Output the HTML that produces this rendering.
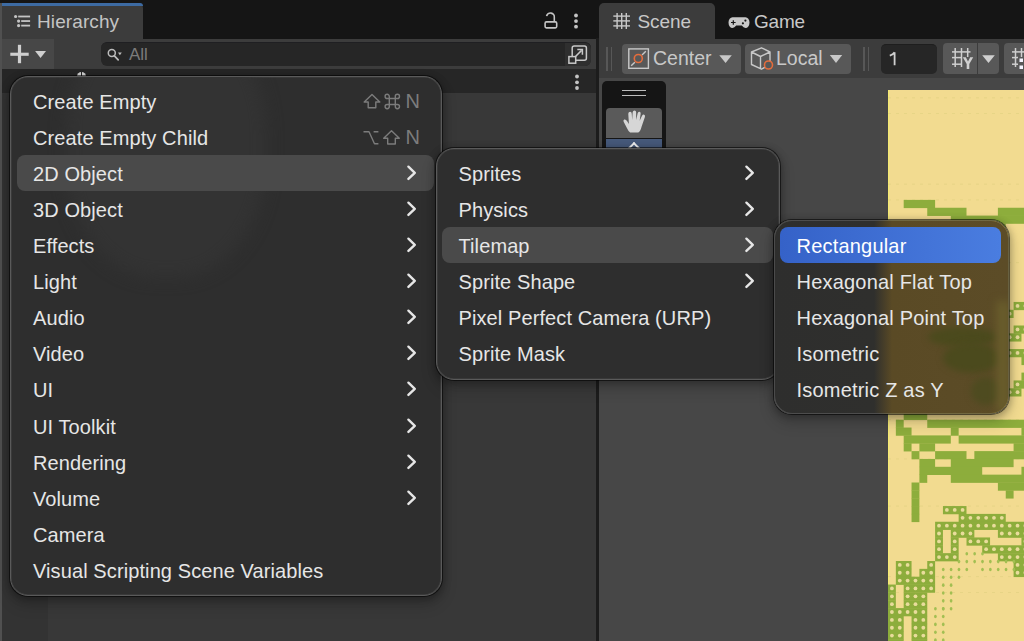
<!DOCTYPE html>
<html><head><meta charset="utf-8"><style>
*{box-sizing:border-box;margin:0;padding:0}
html,body{width:1024px;height:641px;overflow:hidden;background:#151515;font-family:"Liberation Sans",sans-serif;}
.abs{position:absolute}
#root{position:relative;width:1024px;height:641px;overflow:hidden}
.tab{position:absolute;background:#3c3c3c;border-radius:5px 5px 0 0}
.tabtxt{position:absolute;color:#c4c4c4;font-size:19px;letter-spacing:0.1px;line-height:19px;white-space:nowrap}
.menu{position:absolute;background:#2e2e2e;border:1px solid #5a5a5a;border-radius:18px;box-shadow:inset 0 0 0 0.6px #444,0 0 0 1px rgba(0,0,0,0.55),0 2px 7px 2px rgba(0,0,0,0.26),0 8px 14px 3px rgba(0,0,0,0.12)}
.item{position:absolute;height:36px;color:#e6e6e6;font-size:20px;letter-spacing:0.1px;line-height:36px;white-space:nowrap;transform:translateY(0.5px) scaleY(1.055);transform-origin:50% 52%}
.hl{position:absolute;background:#4a4a4a;border-radius:8px}
.btn{position:absolute;background:#585858;border-radius:4px}
.tbt{position:absolute;color:#c8c8c8;font-size:19.5px;line-height:19.5px;white-space:nowrap}
svg{overflow:visible}
</style></head><body><div id="root">
<div class="abs" style="left:0;top:0;width:1024px;height:39px;background:#151515"></div>
<div class="abs" style="left:0;top:3px;width:1.5px;height:638px;background:#505050"></div>
<div class="tab" style="left:1.5px;top:3px;width:141.5px;height:36.5px;border-radius:0 5px 0 0"></div>
<div class="abs" style="left:1.5px;top:3px;width:141.5px;height:3px;background:#3d6ba3;border-radius:0 4px 0 0"></div>
<svg class="abs" style="left:0;top:0" width="40" height="40">
<circle cx="15.6" cy="16.5" r="1.6" fill="#c4c4c4"/><rect x="18.2" y="15.6" width="11.9" height="1.8" fill="#c4c4c4"/>
<circle cx="18.6" cy="21.05" r="1.6" fill="#c4c4c4"/><rect x="21.2" y="20.15" width="8.9" height="1.8" fill="#c4c4c4"/>
<circle cx="18.6" cy="25.6" r="1.6" fill="#c4c4c4"/><rect x="21.2" y="24.7" width="8.9" height="1.8" fill="#c4c4c4"/>
</svg>
<div class="tabtxt" style="left:37px;top:12px">Hierarchy</div>
<svg class="abs" style="left:530px;top:0" width="60" height="40">
<rect x="15.1" y="21.9" width="11.6" height="6.0" rx="1.3" fill="none" stroke="#c4c4c4" stroke-width="1.6"/>
<path d="M16.6 16.2 A3.9 3.9 0 0 1 24.3 17.4 L24.3 21.5" fill="none" stroke="#c4c4c4" stroke-width="1.6"/>
<circle cx="46" cy="15.5" r="1.9" fill="#c4c4c4"/><circle cx="46" cy="21.1" r="1.9" fill="#c4c4c4"/><circle cx="46" cy="26.7" r="1.9" fill="#c4c4c4"/>
</svg>
<div class="abs" style="left:1.5px;top:39px;width:594.5px;height:30px;background:#3c3c3c"></div>
<div class="abs" style="left:2px;top:39px;width:52px;height:29.5px;background:#474747"></div>
<svg class="abs" style="left:0;top:36px" width="60" height="36">
<rect x="17.9" y="8.8" width="3.2" height="18.4" fill="#cfcfcf"/><rect x="10.3" y="16.7" width="18.4" height="3.1" fill="#cfcfcf"/>
<path d="M35.1 14.9 L46 14.9 L40.55 22 Z" fill="#cfcfcf"/>
</svg>
<div class="abs" style="left:101px;top:42px;width:489.5px;height:23.5px;background:#262626;border-radius:6px;border-top:1px solid #1f1f22"></div>
<div class="abs" style="left:565px;top:42.5px;width:25.5px;height:23px;background:#2f2f2f;border-radius:0 6px 6px 0"></div>
<svg class="abs" style="left:98px;top:38px" width="60" height="32">
<circle cx="13.8" cy="15.1" r="3.5" fill="none" stroke="#bdbdbd" stroke-width="1.5"/>
<path d="M16.4 17.8 L20.2 21.8" stroke="#bdbdbd" stroke-width="1.7" stroke-linecap="round"/>
<path d="M20 14.5 L23.8 14.5 L21.9 17.3 Z" fill="#bdbdbd"/>
</svg>
<div class="abs" style="left:129px;top:46px;color:#7b7b7b;font-size:17px;line-height:17px">All</div>
<svg class="abs" style="left:555px;top:38px" width="40" height="32">
<rect x="17.2" y="8" width="14.2" height="14.2" rx="2" fill="none" stroke="#c8c8c8" stroke-width="1.5"/>
<rect x="13.9" y="18.6" width="6.8" height="6.6" fill="#2f2f2f" stroke="#c8c8c8" stroke-width="1.5"/>
<path d="M20 19 L26.6 12.4" stroke="#c8c8c8" stroke-width="1.5"/>
<path d="M22.3 11.6 L27.4 11.6 L27.4 16.7" fill="none" stroke="#c8c8c8" stroke-width="1.5"/>
</svg>
<div class="abs" style="left:2px;top:68.5px;width:594px;height:24.5px;background:#262626"></div>
<svg class="abs" style="left:560px;top:68px" width="30" height="26">
<circle cx="17" cy="8.5" r="1.9" fill="#c4c4c4"/><circle cx="17" cy="14.3" r="1.9" fill="#c4c4c4"/><circle cx="17" cy="20" r="1.9" fill="#c4c4c4"/>
</svg>
<div class="abs" style="left:77px;top:71.5px;width:9px;height:9px;border-radius:5px;background:#d8d8d8"></div><div class="abs" style="left:81px;top:71px;width:1px;height:5px;background:#262626"></div>
<div class="abs" style="left:2px;top:93px;width:594px;height:548px;background:#383838"></div>
<div class="abs" style="left:2px;top:93px;width:46px;height:548px;background:#333333"></div>
<div class="abs" style="left:596px;top:38px;width:3px;height:603px;background:#1c1c1c"></div>
<div class="tab" style="left:599px;top:3px;width:115.5px;height:36.5px;"></div>
<svg class="abs" style="left:600px;top:0" width="40" height="40">
<g stroke="#c8c8c8" stroke-width="1.4">
<line x1="17.1" y1="13" x2="17.1" y2="29"/><line x1="21.7" y1="13" x2="21.7" y2="29"/><line x1="26.3" y1="13" x2="26.3" y2="29"/>
<line x1="13.3" y1="16.1" x2="30" y2="16.1"/><line x1="13.3" y1="20.9" x2="30" y2="20.9"/><line x1="13.3" y1="25.9" x2="30" y2="25.9"/>
</g></svg>
<div class="tabtxt" style="left:637.5px;top:12.3px;color:#c8c8c8;letter-spacing:-0.1px">Scene</div>
<svg class="abs" style="left:720px;top:0" width="40" height="40">
<path d="M12.5 17.2 L25.5 17.2 A4 5.4 0 0 1 25.5 28 Q23.5 28 21.8 25.6 L16.2 25.6 Q14.5 28 12.5 28 A4 5.4 0 0 1 12.5 17.2 Z" fill="#c8c8c8"/>
<path d="M11 22.5 L15.6 22.5 M13.3 20.2 L13.3 24.8" stroke="#151515" stroke-width="1.2"/>
<circle cx="25.4" cy="20.6" r="1.1" fill="#151515"/><circle cx="22.9" cy="23.3" r="1.1" fill="#151515"/>
</svg>
<div class="tabtxt" style="left:754px;top:12.3px;color:#c8c8c8;letter-spacing:-0.2px">Game</div>
<div class="abs" style="left:599px;top:39px;width:425px;height:39px;background:#3c3c3c"></div>
<div class="abs" style="left:606px;top:46.5px;width:1.5px;height:24px;background:#575757"></div>
<div class="abs" style="left:610.8px;top:46.5px;width:1.5px;height:24px;background:#575757"></div>
<div class="btn" style="left:621.5px;top:43.5px;width:119px;height:30px"></div>
<svg class="abs" style="left:620px;top:40px" width="40" height="36">
<rect x="8.8" y="8.9" width="19.6" height="19.4" fill="none" stroke="#c8c8c8" stroke-width="1.4"/>
<path d="M11.2 25.8 L14.8 22.2 M22 15 L25.8 11.2" stroke="#c8c8c8" stroke-width="1.4"/>
<circle cx="18.3" cy="18.5" r="4" fill="#585858" stroke="#e46c3c" stroke-width="1.6"/>
</svg>
<div class="tbt" style="left:653px;top:48.5px">Center</div>
<svg class="abs" style="left:700px;top:40px" width="50" height="36">
<path d="M19.3 15.2 L31.8 15.2 L25.55 23 Z" fill="#c8c8c8"/></svg>
<div class="btn" style="left:745px;top:43.5px;width:106px;height:30px"></div>
<svg class="abs" style="left:745px;top:40px" width="40" height="36">
<path d="M16.5 7.8 L25 12 L25 24.5 L16.5 29.2 L6.5 24.5 L6.5 12 Z M6.5 12 L15.5 16.5 L25 12 M15.5 16.5 L15.5 29" fill="none" stroke="#c8c8c8" stroke-width="1.4" stroke-linejoin="round"/>
<circle cx="23.5" cy="25" r="4" fill="#585858" stroke="#e46c3c" stroke-width="1.6"/>
</svg>
<div class="tbt" style="left:776px;top:48.5px">Local</div>
<svg class="abs" style="left:800px;top:40px" width="50" height="36">
<path d="M29.8 15 L42.2 15 L36 23 Z" fill="#c8c8c8"/></svg>
<div class="abs" style="left:863px;top:46.5px;width:1.5px;height:24px;background:#575757"></div>
<div class="abs" style="left:867.5px;top:46.5px;width:1.5px;height:24px;background:#575757"></div>
<div class="abs" style="left:881px;top:43.5px;width:55.5px;height:30px;background:#262626;border-radius:5px;border-top:1px solid #1e1e1e"></div>
<svg class="abs" style="left:880px;top:40px" width="30" height="36"><path d="M14.6 12.3 L14.6 25.2 M14.6 12.3 Q13.2 14.6 9.8 15.6" fill="none" stroke="#d0d0d0" stroke-width="1.8"/></svg>
<div class="btn" style="left:943.3px;top:43.3px;width:55.7px;height:30.3px"></div>
<div class="btn" style="left:1003.6px;top:43.3px;width:40px;height:30.3px"></div>
<div class="abs" style="left:976.5px;top:43.3px;width:1.6px;height:30.3px;background:#3c3c3c"></div>
<svg class="abs" style="left:940px;top:40px" width="84" height="36">
<g stroke="#cfcfcf" stroke-width="1.5">
<line x1="15.2" y1="8" x2="15.2" y2="27"/><line x1="21.5" y1="8" x2="21.5" y2="27"/><line x1="27.7" y1="8" x2="27.7" y2="17"/>
<line x1="12" y1="11.9" x2="30.5" y2="11.9"/><line x1="12" y1="17.6" x2="22" y2="17.6"/><line x1="12" y1="24.2" x2="22" y2="24.2"/>
</g>
<path d="M22.8 17.3 L25.8 17.3 L28 21.5 L30.2 17.3 L33.2 17.3 L29.3 24 L29.3 29 L26.7 29 L26.7 24 Z" fill="#cfcfcf"/>
<path d="M42.2 15.2 L54.8 15.2 L48.5 23 Z" fill="#cfcfcf"/>
<g stroke="#cfcfcf" stroke-width="1.5">
<line x1="75.5" y1="8" x2="75.5" y2="27"/><line x1="81.5" y1="8" x2="81.5" y2="17"/>
<line x1="72" y1="11.9" x2="84" y2="11.9"/><line x1="72" y1="17.6" x2="78" y2="17.6"/><line x1="72" y1="24.2" x2="78" y2="24.2"/>
</g>
<rect x="79.5" y="18.5" width="3.5" height="3.5" fill="#f4f4ff"/><rect x="79.5" y="25.5" width="3.5" height="3.5" fill="#f4f4ff"/>
</svg>
<div class="abs" style="left:599px;top:78px;width:425px;height:563px;background:#474747"></div>
<div class="abs" style="left:602px;top:81px;width:64px;height:80px;background:#151515;border-radius:5px"></div>
<div class="abs" style="left:622px;top:90px;width:24px;height:1.4px;background:#bdbdbd"></div>
<div class="abs" style="left:622px;top:94.6px;width:24px;height:1.4px;background:#bdbdbd"></div>
<div class="abs" style="left:606px;top:107.5px;width:56px;height:30px;background:#5a5a5a;border-radius:4px 4px 0 0"></div>
<svg class="abs" style="left:606px;top:107px" width="56" height="32">
<path transform="matrix(1.25,0,0,1.08,-7.1,-2.0)" d="M20 16 Q19 14.5 20.2 13.5 Q21.5 13 22.5 14.8 L24 17.5 L23.5 8 Q23.6 6.2 25 6.2 Q26.2 6.2 26.3 8 L26.6 14 L27 6.8 Q27.2 5 28.5 5 Q29.8 5 29.8 6.8 L29.8 14 L31 7.6 Q31.3 6 32.5 6.2 Q33.7 6.5 33.4 8.2 L32.6 14.5 L34.5 10 Q35.2 8.6 36.2 9 Q37.2 9.5 36.8 11 L34.2 20 Q33.2 24.5 31.5 25.5 L25 25.5 Q23.8 24.8 22.5 21.5 Z" fill="#d6d6d6"/>
</svg>
<div class="abs" style="left:606px;top:139px;width:56px;height:12px;background:#46597a"></div>
<div class="abs" style="left:629px;top:144px;width:10px;height:10px;border-left:2px solid #eee;border-top:2px solid #eee;transform:rotate(45deg)"></div>
<svg class="abs" style="left:888px;top:90px" width="136" height="551" viewBox="0 0 136 551">
<rect x="0" y="0" width="136" height="551" fill="#f2db90"/>
<rect x="0" y="0" width="1.2" height="551" fill="#f4ea72"/>
<line x1="0" y1="7.85" x2="136" y2="7.85" stroke="#d9cd7a" stroke-width="0.8" stroke-dasharray="3 5" opacity="0.6"/>
<line x1="0" y1="23.55" x2="136" y2="23.55" stroke="#d9cd7a" stroke-width="0.8" stroke-dasharray="3 5" opacity="0.6"/>
<line x1="0" y1="94.20" x2="136" y2="94.20" stroke="#d9cd7a" stroke-width="0.8" stroke-dasharray="3 5" opacity="0.6"/>
<line x1="0" y1="109.90" x2="136" y2="109.90" stroke="#d9cd7a" stroke-width="0.8" stroke-dasharray="3 5" opacity="0.6"/>
<line x1="0" y1="172.70" x2="136" y2="172.70" stroke="#d9cd7a" stroke-width="0.8" stroke-dasharray="3 5" opacity="0.6"/>
<line x1="0" y1="219.80" x2="136" y2="219.80" stroke="#d9cd7a" stroke-width="0.8" stroke-dasharray="3 5" opacity="0.6"/>
<line x1="0" y1="329.70" x2="136" y2="329.70" stroke="#d9cd7a" stroke-width="0.8" stroke-dasharray="3 5" opacity="0.6"/>
<line x1="0" y1="368.95" x2="136" y2="368.95" stroke="#d9cd7a" stroke-width="0.8" stroke-dasharray="3 5" opacity="0.6"/>
<line x1="0" y1="416.05" x2="136" y2="416.05" stroke="#d9cd7a" stroke-width="0.8" stroke-dasharray="3 5" opacity="0.6"/>
<line x1="0" y1="486.70" x2="136" y2="486.70" stroke="#d9cd7a" stroke-width="0.8" stroke-dasharray="3 5" opacity="0.6"/>
<line x1="0" y1="502.40" x2="136" y2="502.40" stroke="#d9cd7a" stroke-width="0.8" stroke-dasharray="3 5" opacity="0.6"/>
<rect x="15.70" y="109.90" width="31.40" height="8.20" fill="#8dad3c"/>
<rect x="39.25" y="117.75" width="39.25" height="8.20" fill="#8dad3c"/>
<rect x="109.90" y="117.75" width="31.40" height="8.20" fill="#8dad3c"/>
<rect x="62.80" y="125.60" width="78.50" height="8.20" fill="#8dad3c"/>
<rect x="54.95" y="133.45" width="15.70" height="8.20" fill="#8dad3c"/>
<rect x="102.05" y="133.45" width="15.70" height="8.20" fill="#8dad3c"/>
<rect x="23.55" y="141.30" width="31.40" height="8.20" fill="#8dad3c"/>
<rect x="94.20" y="141.30" width="15.70" height="8.20" fill="#8dad3c"/>
<rect x="15.70" y="149.15" width="15.70" height="8.20" fill="#8dad3c"/>
<rect x="78.50" y="149.15" width="23.55" height="8.20" fill="#8dad3c"/>
<rect x="62.80" y="157.00" width="23.55" height="8.20" fill="#8dad3c"/>
<rect x="47.10" y="164.85" width="23.55" height="8.20" fill="#8dad3c"/>
<rect x="39.25" y="172.70" width="15.70" height="8.20" fill="#8dad3c"/>
<rect x="125.60" y="211.95" width="15.70" height="8.20" fill="#8dad3c"/>
<circle cx="129.53" cy="215.88" r="1.9" fill="#e9dc9c"/>
<circle cx="137.38" cy="215.88" r="1.9" fill="#e9dc9c"/>
<rect x="117.75" y="219.80" width="7.85" height="8.20" fill="#8dad3c"/>
<circle cx="121.67" cy="223.72" r="1.9" fill="#e9dc9c"/>
<rect x="125.60" y="235.50" width="15.70" height="8.20" fill="#8dad3c"/>
<circle cx="129.53" cy="239.42" r="1.9" fill="#e9dc9c"/>
<circle cx="137.38" cy="239.42" r="1.9" fill="#e9dc9c"/>
<rect x="117.75" y="243.35" width="15.70" height="8.20" fill="#8dad3c"/>
<circle cx="121.67" cy="247.27" r="1.9" fill="#e9dc9c"/>
<circle cx="129.53" cy="247.27" r="1.9" fill="#e9dc9c"/>
<rect x="117.75" y="259.05" width="23.55" height="8.20" fill="#8dad3c"/>
<circle cx="121.67" cy="262.97" r="1.9" fill="#e9dc9c"/>
<circle cx="129.53" cy="262.97" r="1.9" fill="#e9dc9c"/>
<circle cx="137.38" cy="262.97" r="1.9" fill="#e9dc9c"/>
<rect x="133.45" y="266.90" width="7.85" height="8.20" fill="#8dad3c"/>
<rect x="133.45" y="282.60" width="7.85" height="8.20" fill="#8dad3c"/>
<rect x="125.60" y="290.45" width="15.70" height="8.20" fill="#8dad3c"/>
<circle cx="129.53" cy="294.38" r="1.9" fill="#e9dc9c"/>
<rect x="117.75" y="298.30" width="15.70" height="8.20" fill="#8dad3c"/>
<circle cx="121.67" cy="302.22" r="1.9" fill="#e9dc9c"/>
<circle cx="129.53" cy="302.22" r="1.9" fill="#e9dc9c"/>
<rect x="15.70" y="321.85" width="23.55" height="8.20" fill="#8dad3c"/>
<rect x="7.85" y="329.70" width="7.85" height="8.20" fill="#8dad3c"/>
<rect x="39.25" y="329.70" width="102.05" height="8.20" fill="#8dad3c"/>
<rect x="7.85" y="337.55" width="15.70" height="8.20" fill="#8dad3c"/>
<rect x="62.80" y="337.55" width="7.85" height="8.20" fill="#8dad3c"/>
<rect x="133.45" y="337.55" width="7.85" height="8.20" fill="#8dad3c"/>
<rect x="15.70" y="345.40" width="47.10" height="8.20" fill="#8dad3c"/>
<rect x="70.65" y="345.40" width="70.65" height="8.20" fill="#8dad3c"/>
<rect x="15.70" y="353.25" width="7.85" height="8.20" fill="#8dad3c"/>
<rect x="31.40" y="353.25" width="15.70" height="8.20" fill="#8dad3c"/>
<rect x="125.60" y="353.25" width="15.70" height="8.20" fill="#8dad3c"/>
<rect x="23.55" y="361.10" width="7.85" height="8.20" fill="#8dad3c"/>
<rect x="47.10" y="361.10" width="31.40" height="8.20" fill="#8dad3c"/>
<rect x="86.35" y="361.10" width="54.95" height="8.20" fill="#8dad3c"/>
<rect x="31.40" y="368.95" width="15.70" height="8.20" fill="#8dad3c"/>
<rect x="62.80" y="368.95" width="62.80" height="8.20" fill="#8dad3c"/>
<rect x="31.40" y="376.80" width="62.80" height="8.20" fill="#8dad3c"/>
<rect x="133.45" y="376.80" width="7.85" height="8.20" fill="#8dad3c"/>
<rect x="31.40" y="384.65" width="7.85" height="8.20" fill="#8dad3c"/>
<rect x="62.80" y="384.65" width="78.50" height="8.20" fill="#8dad3c"/>
<rect x="23.55" y="392.50" width="7.85" height="8.20" fill="#8dad3c"/>
<rect x="109.90" y="392.50" width="31.40" height="8.20" fill="#8dad3c"/>
<rect x="23.55" y="400.35" width="7.85" height="8.20" fill="#8dad3c"/>
<rect x="117.75" y="400.35" width="7.85" height="8.20" fill="#8dad3c"/>
<rect x="23.55" y="408.20" width="7.85" height="8.20" fill="#8dad3c"/>
<rect x="23.55" y="416.05" width="7.85" height="8.20" fill="#8dad3c"/>
<rect x="54.95" y="416.05" width="23.55" height="8.20" fill="#8dad3c"/>
<circle cx="58.88" cy="419.97" r="1.9" fill="#e9dc9c"/>
<circle cx="66.72" cy="419.97" r="1.9" fill="#e9dc9c"/>
<circle cx="74.58" cy="419.97" r="1.9" fill="#e9dc9c"/>
<rect x="23.55" y="423.90" width="7.85" height="8.20" fill="#8dad3c"/>
<rect x="70.65" y="423.90" width="47.10" height="8.20" fill="#8dad3c"/>
<circle cx="74.58" cy="427.82" r="1.9" fill="#e9dc9c"/>
<circle cx="82.42" cy="427.82" r="1.9" fill="#e9dc9c"/>
<circle cx="90.27" cy="427.82" r="1.9" fill="#e9dc9c"/>
<circle cx="98.12" cy="427.82" r="1.9" fill="#e9dc9c"/>
<circle cx="105.97" cy="427.82" r="1.9" fill="#e9dc9c"/>
<circle cx="113.82" cy="427.82" r="1.9" fill="#e9dc9c"/>
<rect x="47.10" y="431.75" width="94.20" height="8.20" fill="#8dad3c"/>
<circle cx="51.02" cy="435.67" r="1.9" fill="#e9dc9c"/>
<circle cx="58.88" cy="435.67" r="1.9" fill="#e9dc9c"/>
<circle cx="66.72" cy="435.67" r="1.9" fill="#e9dc9c"/>
<circle cx="74.58" cy="435.67" r="1.9" fill="#e9dc9c"/>
<circle cx="82.42" cy="435.67" r="1.9" fill="#e9dc9c"/>
<circle cx="90.27" cy="435.67" r="1.9" fill="#e9dc9c"/>
<circle cx="98.12" cy="435.67" r="1.9" fill="#e9dc9c"/>
<circle cx="105.97" cy="435.67" r="1.9" fill="#e9dc9c"/>
<circle cx="113.82" cy="435.67" r="1.9" fill="#e9dc9c"/>
<circle cx="121.67" cy="435.67" r="1.9" fill="#e9dc9c"/>
<circle cx="129.53" cy="435.67" r="1.9" fill="#e9dc9c"/>
<circle cx="137.38" cy="435.67" r="1.9" fill="#e9dc9c"/>
<rect x="47.10" y="439.60" width="7.85" height="8.20" fill="#8dad3c"/>
<circle cx="51.02" cy="443.52" r="1.9" fill="#e9dc9c"/>
<rect x="62.80" y="439.60" width="23.55" height="8.20" fill="#8dad3c"/>
<circle cx="66.72" cy="443.52" r="1.9" fill="#e9dc9c"/>
<circle cx="74.58" cy="443.52" r="1.9" fill="#e9dc9c"/>
<circle cx="82.42" cy="443.52" r="1.9" fill="#e9dc9c"/>
<rect x="109.90" y="439.60" width="31.40" height="8.20" fill="#8dad3c"/>
<circle cx="113.82" cy="443.52" r="1.9" fill="#e9dc9c"/>
<circle cx="121.67" cy="443.52" r="1.9" fill="#e9dc9c"/>
<circle cx="129.53" cy="443.52" r="1.9" fill="#e9dc9c"/>
<circle cx="137.38" cy="443.52" r="1.9" fill="#e9dc9c"/>
<rect x="47.10" y="447.45" width="7.85" height="8.20" fill="#8dad3c"/>
<circle cx="51.02" cy="451.38" r="1.9" fill="#e9dc9c"/>
<rect x="62.80" y="447.45" width="7.85" height="8.20" fill="#8dad3c"/>
<circle cx="66.72" cy="451.38" r="1.9" fill="#e9dc9c"/>
<rect x="78.50" y="447.45" width="23.55" height="8.20" fill="#8dad3c"/>
<circle cx="82.42" cy="451.38" r="1.9" fill="#e9dc9c"/>
<circle cx="90.27" cy="451.38" r="1.9" fill="#e9dc9c"/>
<circle cx="98.12" cy="451.38" r="1.9" fill="#e9dc9c"/>
<rect x="133.45" y="447.45" width="7.85" height="8.20" fill="#8dad3c"/>
<circle cx="137.38" cy="451.38" r="1.9" fill="#e9dc9c"/>
<rect x="47.10" y="455.30" width="7.85" height="8.20" fill="#8dad3c"/>
<circle cx="51.02" cy="459.22" r="1.9" fill="#e9dc9c"/>
<rect x="62.80" y="455.30" width="7.85" height="8.20" fill="#8dad3c"/>
<circle cx="66.72" cy="459.22" r="1.9" fill="#e9dc9c"/>
<rect x="94.20" y="455.30" width="47.10" height="8.20" fill="#8dad3c"/>
<circle cx="98.12" cy="459.22" r="1.9" fill="#e9dc9c"/>
<circle cx="105.97" cy="459.22" r="1.9" fill="#e9dc9c"/>
<circle cx="113.82" cy="459.22" r="1.9" fill="#e9dc9c"/>
<circle cx="121.67" cy="459.22" r="1.9" fill="#e9dc9c"/>
<circle cx="129.53" cy="459.22" r="1.9" fill="#e9dc9c"/>
<circle cx="137.38" cy="459.22" r="1.9" fill="#e9dc9c"/>
<rect x="47.10" y="463.15" width="23.55" height="8.20" fill="#8dad3c"/>
<circle cx="51.02" cy="467.07" r="1.9" fill="#e9dc9c"/>
<circle cx="58.88" cy="467.07" r="1.9" fill="#e9dc9c"/>
<circle cx="66.72" cy="467.07" r="1.9" fill="#e9dc9c"/>
<rect x="109.90" y="463.15" width="31.40" height="8.20" fill="#8dad3c"/>
<circle cx="113.82" cy="467.07" r="1.9" fill="#e9dc9c"/>
<circle cx="121.67" cy="467.07" r="1.9" fill="#e9dc9c"/>
<circle cx="129.53" cy="467.07" r="1.9" fill="#e9dc9c"/>
<circle cx="137.38" cy="467.07" r="1.9" fill="#e9dc9c"/>
<rect x="7.85" y="471.00" width="15.70" height="8.20" fill="#8dad3c"/>
<circle cx="11.77" cy="474.92" r="1.9" fill="#e9dc9c"/>
<circle cx="19.62" cy="474.92" r="1.9" fill="#e9dc9c"/>
<rect x="39.25" y="471.00" width="7.85" height="8.20" fill="#8dad3c"/>
<circle cx="43.17" cy="474.92" r="1.9" fill="#e9dc9c"/>
<rect x="125.60" y="471.00" width="15.70" height="8.20" fill="#8dad3c"/>
<circle cx="129.53" cy="474.92" r="1.9" fill="#e9dc9c"/>
<circle cx="137.38" cy="474.92" r="1.9" fill="#e9dc9c"/>
<rect x="7.85" y="478.85" width="15.70" height="8.20" fill="#8dad3c"/>
<circle cx="11.77" cy="482.77" r="1.9" fill="#e9dc9c"/>
<circle cx="19.62" cy="482.77" r="1.9" fill="#e9dc9c"/>
<rect x="31.40" y="478.85" width="15.70" height="8.20" fill="#8dad3c"/>
<circle cx="35.32" cy="482.77" r="1.9" fill="#e9dc9c"/>
<circle cx="43.17" cy="482.77" r="1.9" fill="#e9dc9c"/>
<rect x="125.60" y="478.85" width="15.70" height="8.20" fill="#8dad3c"/>
<circle cx="129.53" cy="482.77" r="1.9" fill="#e9dc9c"/>
<circle cx="137.38" cy="482.77" r="1.9" fill="#e9dc9c"/>
<rect x="7.85" y="486.70" width="39.25" height="8.20" fill="#8dad3c"/>
<circle cx="11.77" cy="490.62" r="1.9" fill="#e9dc9c"/>
<circle cx="19.62" cy="490.62" r="1.9" fill="#e9dc9c"/>
<circle cx="27.47" cy="490.62" r="1.9" fill="#e9dc9c"/>
<circle cx="35.32" cy="490.62" r="1.9" fill="#e9dc9c"/>
<circle cx="43.17" cy="490.62" r="1.9" fill="#e9dc9c"/>
<rect x="0.00" y="494.55" width="7.85" height="8.20" fill="#8dad3c"/>
<circle cx="3.92" cy="498.47" r="1.9" fill="#e9dc9c"/>
<rect x="15.70" y="494.55" width="31.40" height="8.20" fill="#8dad3c"/>
<circle cx="19.62" cy="498.47" r="1.9" fill="#e9dc9c"/>
<circle cx="27.47" cy="498.47" r="1.9" fill="#e9dc9c"/>
<circle cx="35.32" cy="498.47" r="1.9" fill="#e9dc9c"/>
<circle cx="43.17" cy="498.47" r="1.9" fill="#e9dc9c"/>
<rect x="0.00" y="502.40" width="7.85" height="8.20" fill="#8dad3c"/>
<circle cx="3.92" cy="506.32" r="1.9" fill="#e9dc9c"/>
<rect x="15.70" y="502.40" width="23.55" height="8.20" fill="#8dad3c"/>
<circle cx="19.62" cy="506.32" r="1.9" fill="#e9dc9c"/>
<circle cx="27.47" cy="506.32" r="1.9" fill="#e9dc9c"/>
<circle cx="35.32" cy="506.32" r="1.9" fill="#e9dc9c"/>
<rect x="0.00" y="510.25" width="7.85" height="8.20" fill="#8dad3c"/>
<circle cx="3.92" cy="514.17" r="1.9" fill="#e9dc9c"/>
<rect x="15.70" y="510.25" width="23.55" height="8.20" fill="#8dad3c"/>
<circle cx="19.62" cy="514.17" r="1.9" fill="#e9dc9c"/>
<circle cx="27.47" cy="514.17" r="1.9" fill="#e9dc9c"/>
<circle cx="35.32" cy="514.17" r="1.9" fill="#e9dc9c"/>
<rect x="0.00" y="518.10" width="39.25" height="8.20" fill="#8dad3c"/>
<circle cx="3.92" cy="522.02" r="1.9" fill="#e9dc9c"/>
<circle cx="11.77" cy="522.02" r="1.9" fill="#e9dc9c"/>
<circle cx="19.62" cy="522.02" r="1.9" fill="#e9dc9c"/>
<circle cx="27.47" cy="522.02" r="1.9" fill="#e9dc9c"/>
<circle cx="35.32" cy="522.02" r="1.9" fill="#e9dc9c"/>
<rect x="0.00" y="525.95" width="15.70" height="8.20" fill="#8dad3c"/>
<circle cx="3.92" cy="529.88" r="1.9" fill="#e9dc9c"/>
<circle cx="11.77" cy="529.88" r="1.9" fill="#e9dc9c"/>
<rect x="23.55" y="525.95" width="15.70" height="8.20" fill="#8dad3c"/>
<circle cx="27.47" cy="529.88" r="1.9" fill="#e9dc9c"/>
<circle cx="35.32" cy="529.88" r="1.9" fill="#e9dc9c"/>
<rect x="0.00" y="533.80" width="15.70" height="8.20" fill="#8dad3c"/>
<circle cx="3.92" cy="537.73" r="1.9" fill="#e9dc9c"/>
<circle cx="11.77" cy="537.73" r="1.9" fill="#e9dc9c"/>
<rect x="23.55" y="533.80" width="15.70" height="8.20" fill="#8dad3c"/>
<circle cx="27.47" cy="537.73" r="1.9" fill="#e9dc9c"/>
<circle cx="35.32" cy="537.73" r="1.9" fill="#e9dc9c"/>
<rect x="0.00" y="541.65" width="15.70" height="8.20" fill="#8dad3c"/>
<circle cx="3.92" cy="545.57" r="1.9" fill="#e9dc9c"/>
<circle cx="11.77" cy="545.57" r="1.9" fill="#e9dc9c"/>
<rect x="23.55" y="541.65" width="15.70" height="8.20" fill="#8dad3c"/>
<circle cx="27.47" cy="545.57" r="1.9" fill="#e9dc9c"/>
<circle cx="35.32" cy="545.57" r="1.9" fill="#e9dc9c"/>
<rect x="0.00" y="549.50" width="15.70" height="8.20" fill="#8dad3c"/>
<circle cx="3.92" cy="553.42" r="1.9" fill="#e9dc9c"/>
<circle cx="11.77" cy="553.42" r="1.9" fill="#e9dc9c"/>
<rect x="23.55" y="549.50" width="15.70" height="8.20" fill="#8dad3c"/>
<circle cx="27.47" cy="553.42" r="1.9" fill="#e9dc9c"/>
<circle cx="35.32" cy="553.42" r="1.9" fill="#e9dc9c"/>
<ellipse cx="78.80" cy="463.75" rx="1.35" ry="1.8" fill="#a2bf52"/>
<ellipse cx="86.65" cy="463.75" rx="1.35" ry="1.8" fill="#a2bf52"/>
<ellipse cx="94.50" cy="463.75" rx="1.35" ry="1.8" fill="#a2bf52"/>
<ellipse cx="70.95" cy="471.60" rx="1.35" ry="1.8" fill="#a2bf52"/>
<ellipse cx="78.80" cy="471.60" rx="1.35" ry="1.8" fill="#a2bf52"/>
<ellipse cx="86.65" cy="471.60" rx="1.35" ry="1.8" fill="#a2bf52"/>
<ellipse cx="94.50" cy="471.60" rx="1.35" ry="1.8" fill="#a2bf52"/>
<ellipse cx="102.35" cy="471.60" rx="1.35" ry="1.8" fill="#a2bf52"/>
<ellipse cx="110.20" cy="471.60" rx="1.35" ry="1.8" fill="#a2bf52"/>
<ellipse cx="118.05" cy="471.60" rx="1.35" ry="1.8" fill="#a2bf52"/>
<ellipse cx="125.90" cy="471.60" rx="1.35" ry="1.8" fill="#a2bf52"/>
<ellipse cx="55.25" cy="479.45" rx="1.35" ry="1.8" fill="#a2bf52"/>
<ellipse cx="63.10" cy="479.45" rx="1.35" ry="1.8" fill="#a2bf52"/>
<ellipse cx="70.95" cy="479.45" rx="1.35" ry="1.8" fill="#a2bf52"/>
<ellipse cx="78.80" cy="479.45" rx="1.35" ry="1.8" fill="#a2bf52"/>
<ellipse cx="94.50" cy="479.45" rx="1.35" ry="1.8" fill="#a2bf52"/>
<ellipse cx="102.35" cy="479.45" rx="1.35" ry="1.8" fill="#a2bf52"/>
<ellipse cx="110.20" cy="479.45" rx="1.35" ry="1.8" fill="#a2bf52"/>
<ellipse cx="118.05" cy="479.45" rx="1.35" ry="1.8" fill="#a2bf52"/>
<ellipse cx="125.90" cy="479.45" rx="1.35" ry="1.8" fill="#a2bf52"/>
<ellipse cx="55.25" cy="487.30" rx="1.35" ry="1.8" fill="#a2bf52"/>
<ellipse cx="63.10" cy="487.30" rx="1.35" ry="1.8" fill="#a2bf52"/>
<ellipse cx="70.95" cy="487.30" rx="1.35" ry="1.8" fill="#a2bf52"/>
<ellipse cx="55.25" cy="495.15" rx="1.35" ry="1.8" fill="#a2bf52"/>
<ellipse cx="63.10" cy="495.15" rx="1.35" ry="1.8" fill="#a2bf52"/>
<ellipse cx="55.25" cy="503.00" rx="1.35" ry="1.8" fill="#a2bf52"/>
<ellipse cx="63.10" cy="503.00" rx="1.35" ry="1.8" fill="#a2bf52"/>
<ellipse cx="55.25" cy="510.85" rx="1.35" ry="1.8" fill="#a2bf52"/>
<ellipse cx="63.10" cy="510.85" rx="1.35" ry="1.8" fill="#a2bf52"/>
<ellipse cx="55.25" cy="518.70" rx="1.35" ry="1.8" fill="#a2bf52"/>
<ellipse cx="63.10" cy="518.70" rx="1.35" ry="1.8" fill="#a2bf52"/>
<ellipse cx="47.40" cy="518.70" rx="1.35" ry="1.8" fill="#a2bf52"/>
<ellipse cx="55.25" cy="518.70" rx="1.35" ry="1.8" fill="#a2bf52"/>
<ellipse cx="47.40" cy="526.55" rx="1.35" ry="1.8" fill="#a2bf52"/>
<ellipse cx="55.25" cy="526.55" rx="1.35" ry="1.8" fill="#a2bf52"/>
<ellipse cx="47.40" cy="534.40" rx="1.35" ry="1.8" fill="#a2bf52"/>
<ellipse cx="55.25" cy="534.40" rx="1.35" ry="1.8" fill="#a2bf52"/>
<ellipse cx="47.40" cy="542.25" rx="1.35" ry="1.8" fill="#a2bf52"/>
<ellipse cx="55.25" cy="542.25" rx="1.35" ry="1.8" fill="#a2bf52"/>
<ellipse cx="47.40" cy="550.10" rx="1.35" ry="1.8" fill="#a2bf52"/>
<ellipse cx="55.25" cy="550.10" rx="1.35" ry="1.8" fill="#a2bf52"/>
</svg>
<div class="menu" style="left:9.5px;top:75.5px;width:432px;height:520px"></div>
<div class="abs" style="left:10.5px;top:76.5px;width:430px;height:518px;border-radius:17px;overflow:hidden"><div class="abs" style="left:55px;top:-60px;width:200px;height:260px;border-radius:45%;background:#333333;filter:blur(8px)"></div></div>
<div class="hl" style="left:17px;top:155px;width:416.5px;height:36px"></div>
<div class="item" style="left:33px;top:82.6px">Create Empty</div>
<div class="item" style="left:33px;top:118.7px">Create Empty Child</div>
<div class="item" style="left:33px;top:154.8px">2D Object</div>
<svg class="abs" style="left:406px;top:164.8px" width="14" height="16"><path d="M2.4 1.7 L8.8 7.8 L2.4 13.9" fill="none" stroke="#e6e6e6" stroke-width="2.4" stroke-linecap="round" stroke-linejoin="round"/></svg>
<div class="item" style="left:33px;top:190.9px">3D Object</div>
<svg class="abs" style="left:406px;top:200.9px" width="14" height="16"><path d="M2.4 1.7 L8.8 7.8 L2.4 13.9" fill="none" stroke="#e6e6e6" stroke-width="2.4" stroke-linecap="round" stroke-linejoin="round"/></svg>
<div class="item" style="left:33px;top:227.0px">Effects</div>
<svg class="abs" style="left:406px;top:237.0px" width="14" height="16"><path d="M2.4 1.7 L8.8 7.8 L2.4 13.9" fill="none" stroke="#e6e6e6" stroke-width="2.4" stroke-linecap="round" stroke-linejoin="round"/></svg>
<div class="item" style="left:33px;top:263.1px">Light</div>
<svg class="abs" style="left:406px;top:273.1px" width="14" height="16"><path d="M2.4 1.7 L8.8 7.8 L2.4 13.9" fill="none" stroke="#e6e6e6" stroke-width="2.4" stroke-linecap="round" stroke-linejoin="round"/></svg>
<div class="item" style="left:33px;top:299.2px">Audio</div>
<svg class="abs" style="left:406px;top:309.20000000000005px" width="14" height="16"><path d="M2.4 1.7 L8.8 7.8 L2.4 13.9" fill="none" stroke="#e6e6e6" stroke-width="2.4" stroke-linecap="round" stroke-linejoin="round"/></svg>
<div class="item" style="left:33px;top:335.3px">Video</div>
<svg class="abs" style="left:406px;top:345.3px" width="14" height="16"><path d="M2.4 1.7 L8.8 7.8 L2.4 13.9" fill="none" stroke="#e6e6e6" stroke-width="2.4" stroke-linecap="round" stroke-linejoin="round"/></svg>
<div class="item" style="left:33px;top:371.4px">UI</div>
<svg class="abs" style="left:406px;top:381.4px" width="14" height="16"><path d="M2.4 1.7 L8.8 7.8 L2.4 13.9" fill="none" stroke="#e6e6e6" stroke-width="2.4" stroke-linecap="round" stroke-linejoin="round"/></svg>
<div class="item" style="left:33px;top:407.5px">UI Toolkit</div>
<svg class="abs" style="left:406px;top:417.5px" width="14" height="16"><path d="M2.4 1.7 L8.8 7.8 L2.4 13.9" fill="none" stroke="#e6e6e6" stroke-width="2.4" stroke-linecap="round" stroke-linejoin="round"/></svg>
<div class="item" style="left:33px;top:443.6px">Rendering</div>
<svg class="abs" style="left:406px;top:453.6px" width="14" height="16"><path d="M2.4 1.7 L8.8 7.8 L2.4 13.9" fill="none" stroke="#e6e6e6" stroke-width="2.4" stroke-linecap="round" stroke-linejoin="round"/></svg>
<div class="item" style="left:33px;top:479.7px">Volume</div>
<svg class="abs" style="left:406px;top:489.70000000000005px" width="14" height="16"><path d="M2.4 1.7 L8.8 7.8 L2.4 13.9" fill="none" stroke="#e6e6e6" stroke-width="2.4" stroke-linecap="round" stroke-linejoin="round"/></svg>
<div class="item" style="left:33px;top:515.8px">Camera</div>
<div class="item" style="left:33px;top:551.9px">Visual Scripting Scene Variables</div>
<svg class="abs" style="left:355px;top:88px" width="70" height="60">
<g fill="none" stroke="#7c7c7c" stroke-width="1.4" stroke-linejoin="round">
<path d="M17 6.5 L9.2 14 L13.2 14 L13.2 19.8 L20.8 19.8 L20.8 14 L24.8 14 Z"/>
<path d="M34.3 10.5 L34.3 16.5 M40.3 10.5 L40.3 16.5 M34.3 10.5 L40.3 10.5 M34.3 16.5 L40.3 16.5"/>
<path d="M34.3 10.5 L32.2 10.5 A2.1 2.1 0 1 1 34.3 8.4 Z M40.3 10.5 L40.3 8.4 A2.1 2.1 0 1 1 42.4 10.5 Z M34.3 16.5 L34.3 18.6 A2.1 2.1 0 1 1 32.2 16.5 Z M40.3 16.5 L42.4 16.5 A2.1 2.1 0 1 1 40.3 18.6 Z"/>
<path d="M8.5 43.7 L14 43.7 L19.5 55.7 L23.4 55.7 M18.6 43.7 L23.4 43.7"/>
<path d="M36.5 42.8 L28.7 50.3 L32.7 50.3 L32.7 56 L40.3 56 L40.3 50.3 L44.3 50.3 Z"/>
</g>
</svg>
<div class="abs" style="left:405.5px;top:91px;color:#7c7c7c;font-size:20px;line-height:20px">N</div>
<div class="abs" style="left:405.5px;top:127.1px;color:#7c7c7c;font-size:20px;line-height:20px">N</div>
<div class="menu" style="left:435.5px;top:147.5px;width:344px;height:232px"></div>
<div class="hl" style="left:442px;top:227px;width:331px;height:36px"></div>
<div class="item" style="left:458.5px;top:154.8px">Sprites</div>
<svg class="abs" style="left:744px;top:164.8px" width="14" height="16"><path d="M2.4 1.7 L8.8 7.8 L2.4 13.9" fill="none" stroke="#e6e6e6" stroke-width="2.4" stroke-linecap="round" stroke-linejoin="round"/></svg>
<div class="item" style="left:458.5px;top:190.9px">Physics</div>
<svg class="abs" style="left:744px;top:200.9px" width="14" height="16"><path d="M2.4 1.7 L8.8 7.8 L2.4 13.9" fill="none" stroke="#e6e6e6" stroke-width="2.4" stroke-linecap="round" stroke-linejoin="round"/></svg>
<div class="item" style="left:458.5px;top:227.0px">Tilemap</div>
<svg class="abs" style="left:744px;top:237.0px" width="14" height="16"><path d="M2.4 1.7 L8.8 7.8 L2.4 13.9" fill="none" stroke="#e6e6e6" stroke-width="2.4" stroke-linecap="round" stroke-linejoin="round"/></svg>
<div class="item" style="left:458.5px;top:263.1px">Sprite Shape</div>
<svg class="abs" style="left:744px;top:273.1px" width="14" height="16"><path d="M2.4 1.7 L8.8 7.8 L2.4 13.9" fill="none" stroke="#e6e6e6" stroke-width="2.4" stroke-linecap="round" stroke-linejoin="round"/></svg>
<div class="item" style="left:458.5px;top:299.2px">Pixel Perfect Camera (URP)</div>
<div class="item" style="left:458.5px;top:335.3px">Sprite Mask</div>
<div class="menu" style="left:774px;top:220px;width:234.5px;height:194px;border:none;background:linear-gradient(90deg,#575757 0px,#575757 104px,#9c8a3e 118px,#a08e40 234px)"></div>
<div class="abs" style="left:775px;top:221px;width:232.5px;height:192px;border-radius:17px;overflow:hidden;background:linear-gradient(90deg,#2e2e2d 0px,#2f2f2d 99px,#5a4a25 117px,#5c4c27 232px)"><div class="abs" style="left:153px;top:106px;width:70px;height:20px;border-radius:50%;background:#4b4a1d;filter:blur(3px)"></div><div class="abs" style="left:168px;top:122px;width:58px;height:30px;border-radius:50%;background:#4b4a1d;filter:blur(3px)"></div><div class="abs" style="left:196px;top:156px;width:30px;height:28px;border-radius:50%;background:#4e4b20;filter:blur(3px)"></div><div class="abs" style="left:222px;top:80px;width:12px;height:112px;background:#6a5e2c;filter:blur(4px)"></div></div>
<div class="hl" style="left:780px;top:227px;width:221px;height:36px;background:linear-gradient(90deg,#3562c8,#4a7de0)"></div>
<div class="item" style="left:796.5px;top:227.0px;color:#ffffff;letter-spacing:0.2px">Rectangular</div>
<div class="item" style="left:796.5px;top:263.1px;color:#e6e6e6;letter-spacing:0.2px">Hexagonal Flat Top</div>
<div class="item" style="left:796.5px;top:299.2px;color:#e6e6e6;letter-spacing:0.2px">Hexagonal Point Top</div>
<div class="item" style="left:796.5px;top:335.3px;color:#e6e6e6;letter-spacing:0.2px">Isometric</div>
<div class="item" style="left:796.5px;top:371.4px;color:#e6e6e6;letter-spacing:0.2px">Isometric Z as Y</div>
</div></body></html>
